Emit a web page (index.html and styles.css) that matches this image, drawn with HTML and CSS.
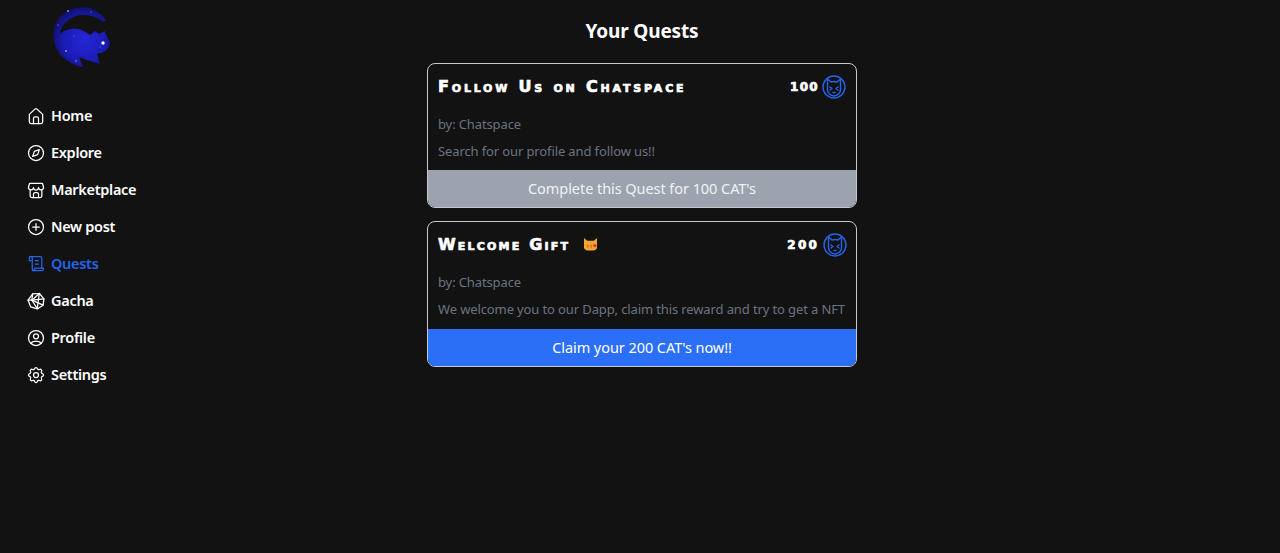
FILE: index.html
```html
<!DOCTYPE html>
<html lang="en">
<head>
<meta charset="utf-8">
<title>Your Quests</title>
<link rel="stylesheet" href="styles.css">
</head>
<body>
<div class="page">
  <aside class="sidebar">
    <svg class="logo" viewBox="0 0 58 61" aria-label="logo">
      <defs>
        <radialGradient id="lg" cx="0.55" cy="0.55" r="0.6">
          <stop offset="0" stop-color="#2626d8"/>
          <stop offset="0.6" stop-color="#1c1cb8"/>
          <stop offset="1" stop-color="#0e0e62"/>
        </radialGradient>
      </defs>
      <path fill="url(#lg)" d="M53 13C47 5 39 .3 30 .3C13 .3 .3 12 .3 28C.3 44 13 57 30 60L26 50L34 53L47 57L44 46.500C51 46 56 43 57 36.500L51.500 24L46 27L42 24L37 28C32 24 26 21 20.500 21.500C15 22 11 24 7 26.500C8 20 11 16 15.500 13C21 8.500 26 8 30.500 8C38 8 45 10 50.500 15Z"/>
      <g fill="#9aa0ff">
        <circle cx="15" cy="4" r=".9"/><circle cx="5" cy="18" r=".6"/><circle cx="38" cy="5" r=".5"/><circle cx="23" cy="54" r=".8"/>
        <circle cx="13" cy="44" r=".9"/><circle cx="21" cy="29" r=".5"/><circle cx="47" cy="40" r=".5"/>
      </g>
      <circle cx="50" cy="36" r="1.700" fill="#fff"/>
    </svg>
    <nav class="nav">
      <a class="nav-item"><svg class="ico" viewBox="0 0 24 24"><path d="M4 10l7-6.500a1.500 1.500 0 0 1 2 0L20 10v9a2 2 0 0 1-2 2H6a2 2 0 0 1-2-2z"/><path d="M9 21v-6a2 2 0 0 1 2-2h2a2 2 0 0 1 2 2v6"/></svg>Home</a>
      <a class="nav-item"><svg class="ico" viewBox="0 0 24 24"><circle cx="12" cy="12" r="9"/><path d="M8 16l2-6 6-2-2 6-6 2"/></svg>Explore</a>
      <a class="nav-item"><svg class="ico" viewBox="0 0 24 24"><path d="M5 4h14a1 1 0 0 1 1 .8L21 8.500a3 3 0 0 1-6 .5 3 3 0 0 1-6 0 3 3 0 0 1-6-.5L4 4.800A1 1 0 0 1 5 4z"/><path d="M5 12v7a2 2 0 0 0 2 2h10a2 2 0 0 0 2-2v-7"/><path d="M9 21v-4a2 2 0 0 1 2-2h2a2 2 0 0 1 2 2v4"/></svg>Marketplace</a>
      <a class="nav-item"><svg class="ico" viewBox="0 0 24 24"><circle cx="12" cy="12" r="9"/><path d="M8 12h8"/><path d="M12 8v8"/></svg>New post</a>
      <a class="nav-item active"><svg class="ico" viewBox="0 0 24 24"><path d="M6 8H4V4.500a1.750 1.750 0 0 1 3.500 0V17a3 3 0 0 0 3 3H19a2 2 0 0 0 2-2v-1H10.500v1a2 2 0 0 1-3 1.700"/><path d="M5 3h12a2 2 0 0 1 2 2v12"/><path d="M11 8h4"/><path d="M11 12h4"/></svg>Quests</a>
      <a class="nav-item"><svg class="ico" viewBox="0 0 24 24"><path d="M8 3.500l8-.5 5.500 6.500-1 7.500-7 4.500-8-2.500L2.500 11z"/><path d="M8 3.500L7 11H2.500"/><path d="M16 3L7 11l6.500 10"/><path d="M21.500 9.500L7 11"/><path d="M16 3l-2.500 18"/><path d="M20.500 17L7 11"/></svg>Gacha</a>
      <a class="nav-item"><svg class="ico" viewBox="0 0 24 24"><circle cx="12" cy="12" r="9"/><circle cx="12" cy="10" r="3"/><path d="M6.168 18.849A4 4 0 0 1 10 16h4a4 4 0 0 1 3.834 2.855"/></svg>Profile</a>
      <a class="nav-item"><svg class="ico" viewBox="0 0 24 24"><path d="M10.325 4.317c.426-1.756 2.924-1.756 3.350 0a1.724 1.724 0 0 0 2.573 1.066c1.543-.94 3.310.826 2.370 2.370a1.724 1.724 0 0 0 1.065 2.572c1.756.426 1.756 2.924 0 3.350a1.724 1.724 0 0 0-1.066 2.573c.94 1.543-.826 3.310-2.370 2.370a1.724 1.724 0 0 0-2.572 1.065c-.426 1.756-2.924 1.756-3.350 0a1.724 1.724 0 0 0-2.573-1.066c-1.543.94-3.310-.826-2.370-2.370a1.724 1.724 0 0 0-1.065-2.572c-1.756-.426-1.756-2.924 0-3.350a1.724 1.724 0 0 0 1.066-2.573c-.94-1.543.826-3.310 2.370-2.370 1 .608 2.296.070 2.572-1.065z"/><circle cx="12" cy="12" r="3"/></svg>Settings</a>
    </nav>
  </aside>
  <main class="main">
    <h1 class="heading">Your Quests</h1>
    <section class="card">
      <div class="card-head">
        <h2 class="card-title">Follow Us on Chatspace</h2>
        <div class="reward"><span class="amount">100</span>
          <svg class="coin" viewBox="0 0 24 24"><circle cx="12" cy="12" r="11"/><path d="M5.500 4l3.500 3a9 9 0 0 1 6 0l3.500-3v10.500a6.500 6.500 0 0 1-13 0z"/><path d="M8 12l2 1.500-2 1.500"/><path d="M16 12l-2 1.500 2 1.500"/><path d="M11 17.500h2"/></svg>
        </div>
      </div>
      <p class="by">by: Chatspace</p>
      <p class="desc">Search for our profile and follow us!!</p>
      <button class="cta cta-done">Complete this Quest for 100 CAT's</button>
    </section>
    <section class="card card-tall">
      <div class="card-head">
        <h2 class="card-title title-tight">Welcome Gift
          <svg class="emoji" viewBox="0 0 12 12"><path fill="#f5a431" d="M0 0l3 2.500h6L12 0v8a3 3 0 0 1-3 3.500H3A3 3 0 0 1 0 8z"/><path fill="#c96a1a" d="M3 6h1v3H3zM6 6h1v3H6z"/><circle cx="10" cy="7" r="1.500" fill="#d8323c"/></svg>
        </h2>
        <div class="reward reward-wide"><span class="amount">200</span>
          <svg class="coin" viewBox="0 0 24 24"><circle cx="12" cy="12" r="11"/><path d="M5.500 4l3.500 3a9 9 0 0 1 6 0l3.500-3v10.500a6.500 6.500 0 0 1-13 0z"/><path d="M8 12l2 1.500-2 1.500"/><path d="M16 12l-2 1.500 2 1.500"/><path d="M11 17.500h2"/></svg>
        </div>
      </div>
      <p class="by">by: Chatspace</p>
      <p class="desc">We welcome you to our Dapp, claim this reward and try to get a NFT</p>
      <button class="cta cta-live">Claim your 200 CAT's now!!</button>
    </section>
  </main>
</div>
</body>
</html>
```

FILE: styles.css
```css
* { box-sizing: border-box; }
html, body { margin: 0; height: 100%; }
body {
  background: #121212;
  color: #fff;
  font-family: "Noto Sans", "Open Sans", sans-serif;
  overflow: hidden;
}
.page {
  display: grid;
  grid-template-columns: 427px 430px 1fr;
  height: 553px;
}
.sidebar { padding: 7px 0 0 26px; }
.logo { display: block; width: 58px; height: 61px; margin-left: 27px; filter: blur(0.4px); }
.nav { display: flex; flex-direction: column; margin-top: 28px; }
.nav-item {
  display: flex;
  align-items: center;
  gap: 5px;
  height: 37px;
  font-size: 14.5px;
  font-weight: 600;
  letter-spacing: -0.3px;
  color: #fff;
}
.nav-item.active { color: #2563eb; }
.ico {
  width: 20px;
  height: 20px;
  margin-top: 2px;
  fill: none;
  stroke: currentColor;
  stroke-width: 1.5;
  stroke-linecap: round;
  stroke-linejoin: round;
  flex: none;
}
.main { grid-column: 2; padding-top: 17px; display: flex; flex-direction: column; gap: 13px; }
.heading {
  margin: 0 0 5px;
  text-align: center;
  font-size: 19px;
  line-height: 28px;
  font-weight: 700;
  letter-spacing: -0.15px;
}
.card {
  height: 145px;
  border: 1px solid #c4c8cf;
  border-radius: 8px;
  overflow: hidden;
  display: flex;
  flex-direction: column;
}
.card-tall { height: 146px; }
.card-head {
  display: flex;
  justify-content: space-between;
  align-items: center;
  height: 45px;
  padding: 0 10px;
}
.card-title {
  display: flex;
  align-items: center;
  gap: 14px;
  margin: 0;
  font-family: "DejaVu Sans", sans-serif;
  font-size: 16px;
  font-weight: 700;
  font-variant: small-caps;
  letter-spacing: 2.8px;
  -webkit-text-stroke: 0.7px #fff;
}
.title-tight { letter-spacing: 2.2px; }
.emoji { width: 13px; height: 13px; }
.reward { display: flex; align-items: center; gap: 3px; }
.reward-wide { gap: 4px; margin-right: -1px; }
.amount {
  font-family: "DejaVu Sans", sans-serif;
  font-size: 12px;
  font-weight: 700;
  letter-spacing: 1.3px;
  -webkit-text-stroke: 0.7px #fff;
}
.reward-wide .amount { letter-spacing: 2.2px; }
.coin {
  width: 24px;
  height: 24px;
  fill: none;
  stroke: #2563eb;
  stroke-width: 1.4;
  stroke-linejoin: round;
  stroke-linecap: round;
}
.by, .desc {
  margin: 0;
  padding: 0 10px;
  font-size: 13px;
  line-height: 27px;
  color: #6b7280;
  white-space: nowrap;
  letter-spacing: -0.12px;
}
.by { margin-top: 2px; }
.cta {
  margin-top: auto;
  height: 37px;
  padding: 0 0 2px;
  border: 0;
  font: inherit;
  font-size: 14.5px;
  letter-spacing: -0.06px;
  color: #fff;
  flex: none;
}
.cta-done { background: #9ca3af; color: #f0f2f5; }
.cta-live { background: #2a6ff5; }
```
